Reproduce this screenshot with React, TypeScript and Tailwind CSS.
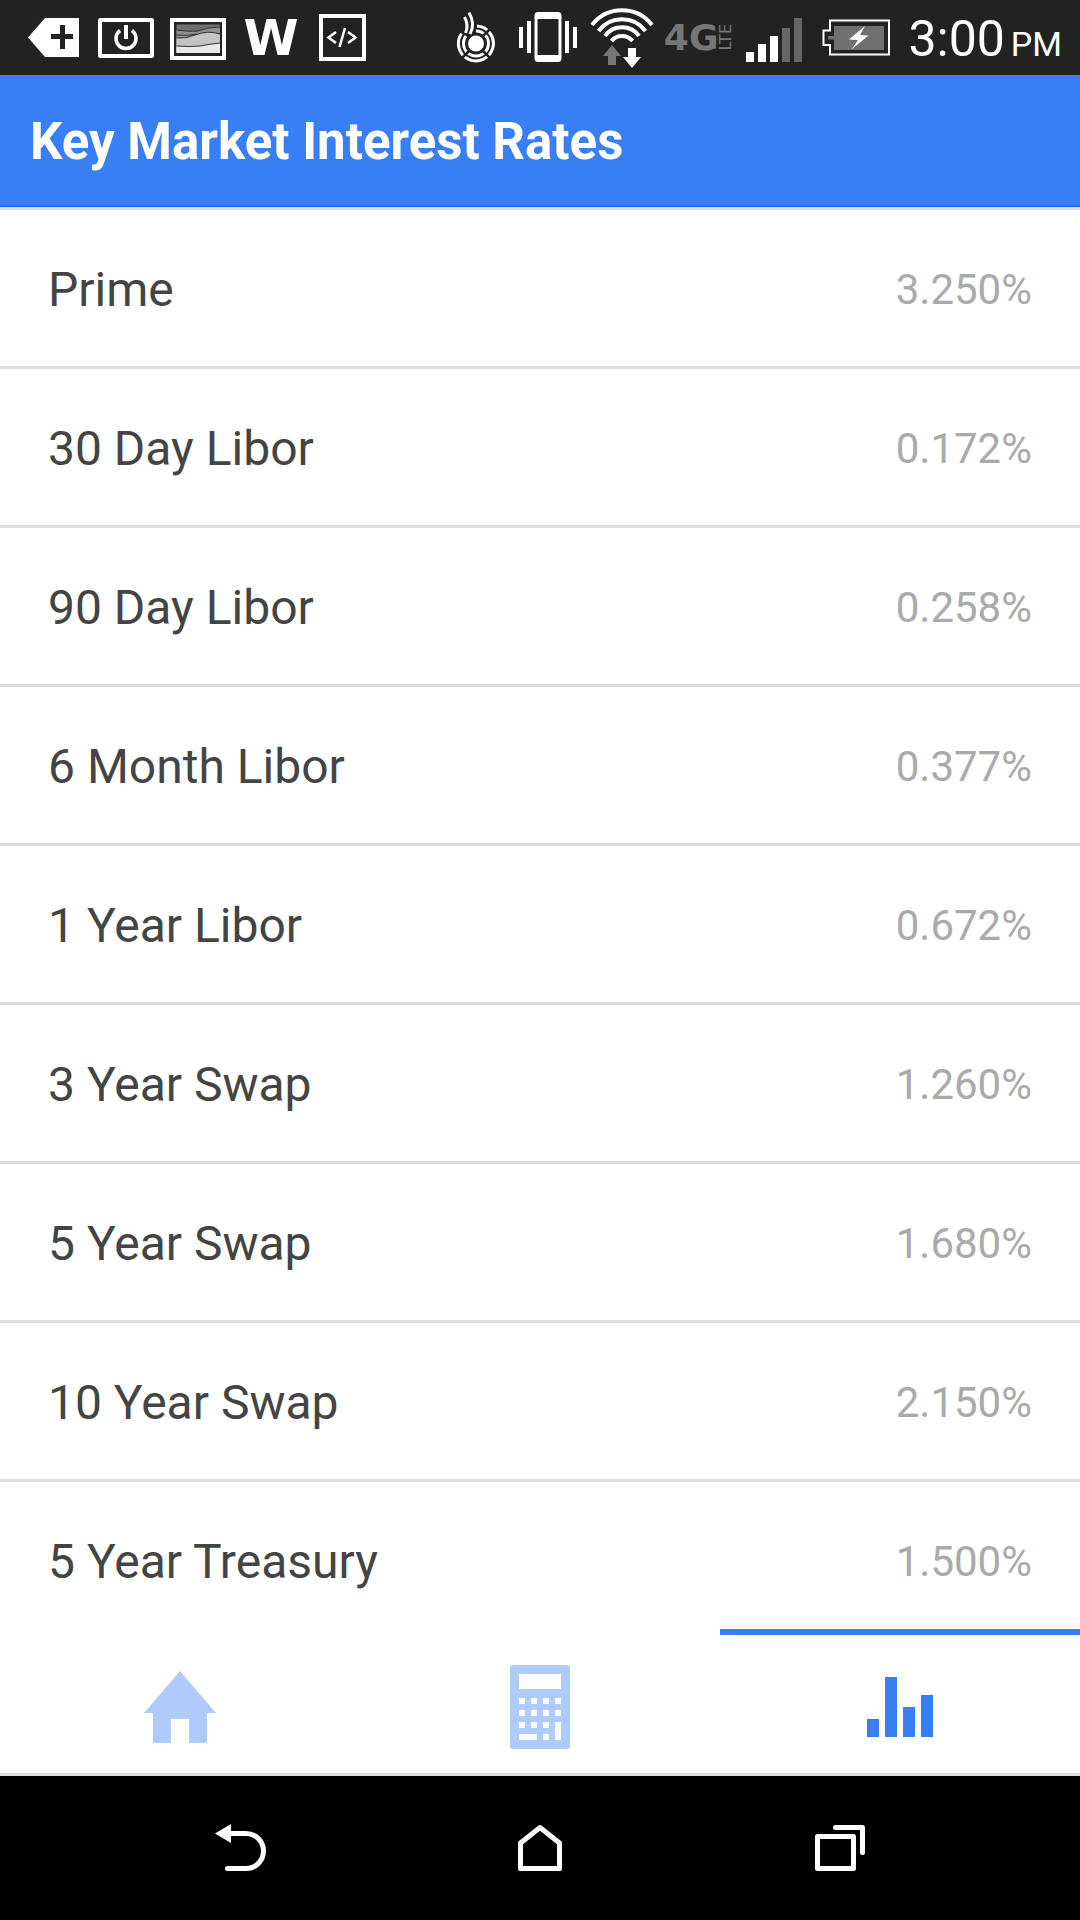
import React, { useState } from 'react';

type Rate = { name: string; value: string };

const RATES: Rate[] = [
  { name: 'Prime', value: '3.250%' },
  { name: '30 Day Libor', value: '0.172%' },
  { name: '90 Day Libor', value: '0.258%' },
  { name: '6 Month Libor', value: '0.377%' },
  { name: '1 Year Libor', value: '0.672%' },
  { name: '3 Year Swap', value: '1.260%' },
  { name: '5 Year Swap', value: '1.680%' },
  { name: '10 Year Swap', value: '2.150%' },
  { name: '5 Year Treasury', value: '1.500%' },
];

const HomeIcon = () => (
  <svg width="72" height="72" viewBox="0 0 72 72" fill="currentColor">
    <path d="M36 0 72 42H63V72H45V48H27V72H9V42H0Z" />
  </svg>
);

const CalculatorIcon = () => (
  <svg width="60" height="84" viewBox="0 0 60 84">
    <rect width="60" height="84" rx="3" fill="currentColor" />
    <path
      fill="#fff"
      d="M9 9h42v15H9zM9 33h6v6H9zM21 33h6v6h-6zM33 33h6v6h-6zM45 33h6v6h-6zM9 45h6v6H9zM21 45h6v6h-6zM33 45h6v6h-6zM45 45h6v6h-6zM9 57h6v6H9zM21 57h6v6h-6zM33 57h6v6h-6zM45 57h6v18h-6zM9 69h18v6H9zM33 69h6v6h-6z"
    />
  </svg>
);

const BarsIcon = () => (
  <svg width="66" height="60" viewBox="0 0 66 60" fill="currentColor">
    <path d="M0 42h12v18H0zM18 0h12v60H18zM36 30h12v30H36zM54 18h12v42H54z" />
  </svg>
);

const TABS = [
  { id: 'home', label: 'Home', Icon: HomeIcon },
  { id: 'calculator', label: 'Calculator', Icon: CalculatorIcon },
  { id: 'rates', label: 'Rates', Icon: BarsIcon },
];

const StatusBar: React.FC = () => (
  <div className="h-[75px] shrink-0 bg-[#222] text-white flex items-center justify-between pl-7 pr-[18px]">
    <div className="flex items-center gap-4">
      <svg width="51" height="75" viewBox="28 0 51 75">
        <path fill="#fff" fillRule="evenodd" d="M28 37.5 45 18H79V57H45ZM60 25V34H51V39H60V49H65V39H73V34H65V25Z" />
      </svg>
      <svg width="59" height="75" viewBox="95 0 59 75" fill="none" stroke="#fff" strokeWidth="4">
        <rect x="100" y="20" width="52" height="36" rx="0.5" />
        <path d="M120 30.500A10 10 0 1 0 132 30.500" strokeWidth="3.500" />
        <path d="M126 25V39" />
      </svg>
      <svg width="56" height="75" viewBox="170 0 56 75">
        <rect x="172" y="20" width="52" height="38" fill="none" stroke="#fff" strokeWidth="4" />
        <path d="M176.500 24.500H220V53H176.500Z" fill="#707070" />
        <path d="M176.500 30Q188 32 198 31Q207 27 220 27V53H176.500Z" fill="#8f8f8f" />
        <path d="M176.500 38Q186 39 195 35Q208 30 220 34V53H176.500Z" fill="#c4c4c4" />
        <path d="M176.500 46Q190 47 200 46Q210 44 220 43V53H176.500Z" fill="#e9e9e9" />
        <g fill="none" stroke="#333" strokeWidth="1">
          <path d="M176.500 30Q188 32 198 31Q207 27 220 27" />
          <path d="M176.500 35Q188 36 197 34" />
          <path d="M176.500 38Q186 39 195 35Q208 30 220 34" />
          <path d="M176.500 46Q190 47 200 46Q210 44 220 43" />
        </g>
      </svg>
      <span className="w-[58px] text-center font-['DejaVu_Sans',sans-serif] font-bold text-[50px] leading-[50px]">W</span>
      <svg width="50" height="75" viewBox="316 0 50 75" fill="none" stroke="#fff">
        <rect x="321" y="16" width="43" height="43" strokeWidth="4" />
        <path d="M336 32 328.500 37.500 336 43M348 32 355.500 37.500 348 43" strokeWidth="2.500" />
        <path d="M345 28 339.500 47" strokeWidth="2.500" />
      </svg>
    </div>

    <div className="flex items-center gap-3">
      {/* flame */}
      <svg width="50" height="75" viewBox="460 0 50 75" fill="none" stroke="#fff" strokeWidth="3">
        <circle cx="479" cy="43.500" r="8" fill="#fff" stroke="none" />
        <path d="M479 31A12.500 12.500 0 1 1 469 36" />
        <path d="M480 26A17.500 17.500 0 1 1 464.500 33.500" />
        <path d="M486 36 494 28M486 51 494 59M472 51 464 59M470 34 464 28" stroke="#222" strokeWidth="2.500" />
        <path d="M472 12.500Q478.500 24 473 34M467.500 17Q472 25 468.500 33" />
      </svg>
      {/* vibrate */}
      <svg width="60" height="75" viewBox="522 0 60 75" fill="#fff">
        <path fillRule="evenodd" d="M541 12H561Q564.500 12 564.500 15.500V58.500Q564.500 62 561 62H541Q537.500 62 537.500 58.500V15.500Q537.500 12 541 12ZM540.500 19V55H561.500V19Z" />
        <path d="M522 27h4v21h-4zM530 21h4v32h-4zM568 21h4v32h-4zM576 27h4v21h-4z" />
      </svg>
      <svg width="61" height="75" viewBox="594 0 61 75" fill="none" stroke="#fff" strokeWidth="4" overflow="visible">
        <path d="M595 25A38 38 0 0 1 655 25M601.500 31A29.500 29.500 0 0 1 648.500 31M608 36A21 21 0 0 1 642 36M614.500 41A13.500 13.500 0 0 1 635.500 41" />
        <path d="M615 45 624 56H619V65H611V56H606Z" fill="#777" stroke="none" />
        <path d="M635 68 626 57H631V48H639V57H644Z" fill="#fff" stroke="none" />
      </svg>
      <span className="flex items-center text-[#777] font-['DejaVu_Sans',sans-serif]">
        <span className="font-bold text-[36px] leading-[36px]">4G</span>
        <span className="[writing-mode:vertical-rl] rotate-180 text-[16px] leading-[16px]">LTE</span>
      </span>
      <svg width="64" height="75" viewBox="749 0 64 75" fill="#fff">
        <path d="M749 52h8v10h-8zM761 44h8v18h-8zM773 36h8v26h-8z" />
        <path d="M785 28h8v34h-8zM797 18h8v44h-8z" fill="#666" />
      </svg>
      <svg width="74" height="75" viewBox="825 0 74 75">
        <path d="M833 20.500H892V54.500H833V45H826.500V30.500H833Z" fill="none" stroke="#fff" strokeWidth="2" />
        <path d="M837 26H887V50H837V39.500H831V36H837Z" fill="#707070" />
        <path d="M868 26 852 39.500 861 40 854.500 49.500 871.500 35.500 863 35Z" fill="#fff" />
      </svg>
      <div className="flex items-baseline gap-1.5 pt-2">
        <span className="text-[50px] leading-[60px]">3:00</span>
        <span className="text-[34px] leading-[60px]">PM</span>
      </div>
    </div>
  </div>
);

const SystemNav: React.FC = () => (
  <nav aria-label="System" className="h-36 shrink-0 bg-black text-white grid grid-cols-3 items-center justify-items-center px-[90px]">
    <button aria-label="Back">
      <svg width="72" height="72" viewBox="0 0 72 72" fill="none" stroke="currentColor" strokeWidth="5" strokeLinecap="round">
        <path d="M11 21.500 27 12V31Z" fill="currentColor" stroke="none" />
        <path d="M25 21.500H42A17.500 17.500 0 0 1 42 56.500H23.500" />
      </svg>
    </button>
    <button aria-label="Home screen">
      <svg width="72" height="72" viewBox="0 0 72 72" fill="none" stroke="currentColor" strokeWidth="5" strokeLinejoin="round">
        <path d="M16.500 31 36 15.500 55.500 31V56.500H16.500Z" />
      </svg>
    </button>
    <button aria-label="Recent apps">
      <svg width="72" height="72" viewBox="0 0 72 72" fill="none" stroke="currentColor" strokeWidth="5" strokeLinejoin="round" strokeLinecap="round">
        <rect x="13.500" y="24.500" width="36" height="32" />
        <path d="M31.500 15.500H58.500V40.500" />
      </svg>
    </button>
  </nav>
);

export default function App() {
  const [activeTab, setActiveTab] = useState('rates');

  return (
    <div className="h-screen flex flex-col bg-white font-[Roboto,sans-serif]">
      <StatusBar />

      <header className="h-[132px] shrink-0 bg-[#387ef5] border-b border-[#0c63ee] flex items-center px-[30px] pt-0.5">
        <h1 className="text-white font-bold text-[51px] leading-[60px]">Key Market Interest Rates</h1>
      </header>

      <main className="flex-1 min-h-0 overflow-hidden">
        <ul className="border-t-3 border-[#ddd]">
          {RATES.map(rate => (
            <li key={rate.name} className="h-[159px] flex items-center justify-between px-12 pt-[3px] border-b-3 border-[#ddd]">
              <span className="text-[48px] leading-[60px] text-[#444]">{rate.name}</span>
              <span className="text-[42px] leading-[60px] text-[#aaa]">{rate.value}</span>
            </li>
          ))}
        </ul>
      </main>

      <nav aria-label="Sections" className="h-[147px] shrink-0 grid grid-cols-3 bg-white border-b-3 border-[#ddd]">
        {TABS.map(({ id, label, Icon }) => {
          const active = id === activeTab;
          return (
            <button
              key={id}
              aria-label={label}
              onClick={() => setActiveTab(id)}
              className={`flex items-center justify-center border-t-6 pt-1.5 ${active ? 'border-[#387ef5] text-[#387ef5]' : 'border-transparent text-[#afcbfb]'}`}
            >
              <Icon />
            </button>
          );
        })}
      </nav>

      <SystemNav />
    </div>
  );
}
